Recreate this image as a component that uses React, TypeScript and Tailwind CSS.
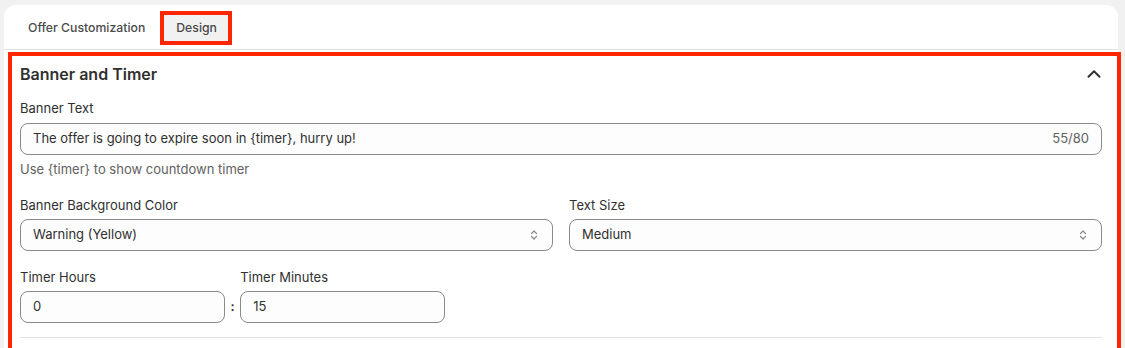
import React from "react";
import { ChevronUp } from "lucide-react";

function SelectArrows() {
  return (
    <svg width="8" height="12" viewBox="0 0 8 12" fill="none" className="shrink-0">
      <path d="M1.5 4.5 4 2l2.5 2.5" stroke="#8a8a8a" strokeWidth="1.2" strokeLinecap="round" strokeLinejoin="round" />
      <path d="M1.5 7.5 4 10l2.5-2.5" stroke="#8a8a8a" strokeWidth="1.2" strokeLinecap="round" strokeLinejoin="round" />
    </svg>
  );
}

function Label({ children }: { children: React.ReactNode }) {
  return <div className="text-[13px] leading-5 text-[#303030] mb-[4px]">{children}</div>;
}

function Select({ value }: { value: string }) {
  return (
    <div className="flex items-center justify-between h-8 rounded-lg border border-[#8a8a8a] bg-[#fdfdfd] pl-3 pr-[14px] text-[13px] text-[#303030]">
      <span>{value}</span>
      <SelectArrows />
    </div>
  );
}

export default function App() {
  return (
    <div
      className="min-h-[348px] bg-[#f1f1f1] pt-[5px] pl-1 pr-[7px] overflow-hidden"
      style={{ fontFamily: "Inter, 'Noto Sans', sans-serif" }}
    >
      <div className="bg-white rounded-t-xl">
        {/* Tabs */}
        <div className="flex items-start gap-[7px] px-3 pt-[10px] pb-2 border-b border-[#e3e3e3]">
          <button className="h-[26px] px-3 text-[12.25px] font-[550] text-[#4a4a4a]">
            Offer Customization
          </button>
          <button className="h-[26px] pl-3 pr-[11px] rounded-none bg-[#f1f1f1] text-[12.25px] font-[550] text-[#4a4a4a] outline-4 outline-[#ff2600]">
            Design
          </button>
        </div>

        {/* Section */}
        <div className="relative px-4 pt-3 pb-10">
          <div className="pointer-events-none absolute left-1 top-[2px] -right-[3px] -bottom-2 border-4 border-[#ff2600]" />

          <div className="flex items-center justify-between">
            <h2 className="text-[16px] leading-6 font-semibold text-[#303030]">Banner and Timer</h2>
            <ChevronUp size={22} strokeWidth={2.2} className="text-[#303030] mr-[-3px]" />
          </div>

          <div className="mt-3">
            <div className="mb-[5px]">
              <div className="text-[13px] leading-5 text-[#303030]">Banner Text</div>
            </div>
            <div className="flex items-center justify-between h-8 rounded-lg border border-[#8a8a8a] bg-[#fdfdfd] pl-3 pr-[12px] text-[13px] text-[#303030]">
              <span>The offer is going to expire soon in {"{timer}"}, hurry up!</span>
              <span className="text-[#616161]">55/80</span>
            </div>
            <div className="mt-1 text-[13px] leading-5 text-[#616161]">Use {"{timer}"} to show countdown timer</div>
          </div>

          <div className="mt-4 grid grid-cols-2 gap-4">
            <div>
              <Label>Banner Background Color</Label>
              <Select value="Warning (Yellow)" />
            </div>
            <div>
              <Label>Text Size</Label>
              <Select value="Medium" />
            </div>
          </div>

          <div className="mt-4 flex items-end gap-[5.5px]">
            <div className="w-[205px]">
              <Label>Timer Hours</Label>
              <div className="flex items-center h-8 rounded-lg border border-[#8a8a8a] bg-[#fdfdfd] px-3 text-[13px] text-[#303030]">
                0
              </div>
            </div>
            <div className="h-8 flex items-center text-[13px] font-semibold text-[#303030]">:</div>
            <div className="w-[205px]">
              <Label>Timer Minutes</Label>
              <div className="flex items-center h-8 rounded-lg border border-[#8a8a8a] bg-[#fdfdfd] px-3 text-[13px] text-[#303030]">
                15
              </div>
            </div>
          </div>

          <div className="mt-[14px] border-t border-[#e3e3e3]" />
        </div>
      </div>
    </div>
  );
}
